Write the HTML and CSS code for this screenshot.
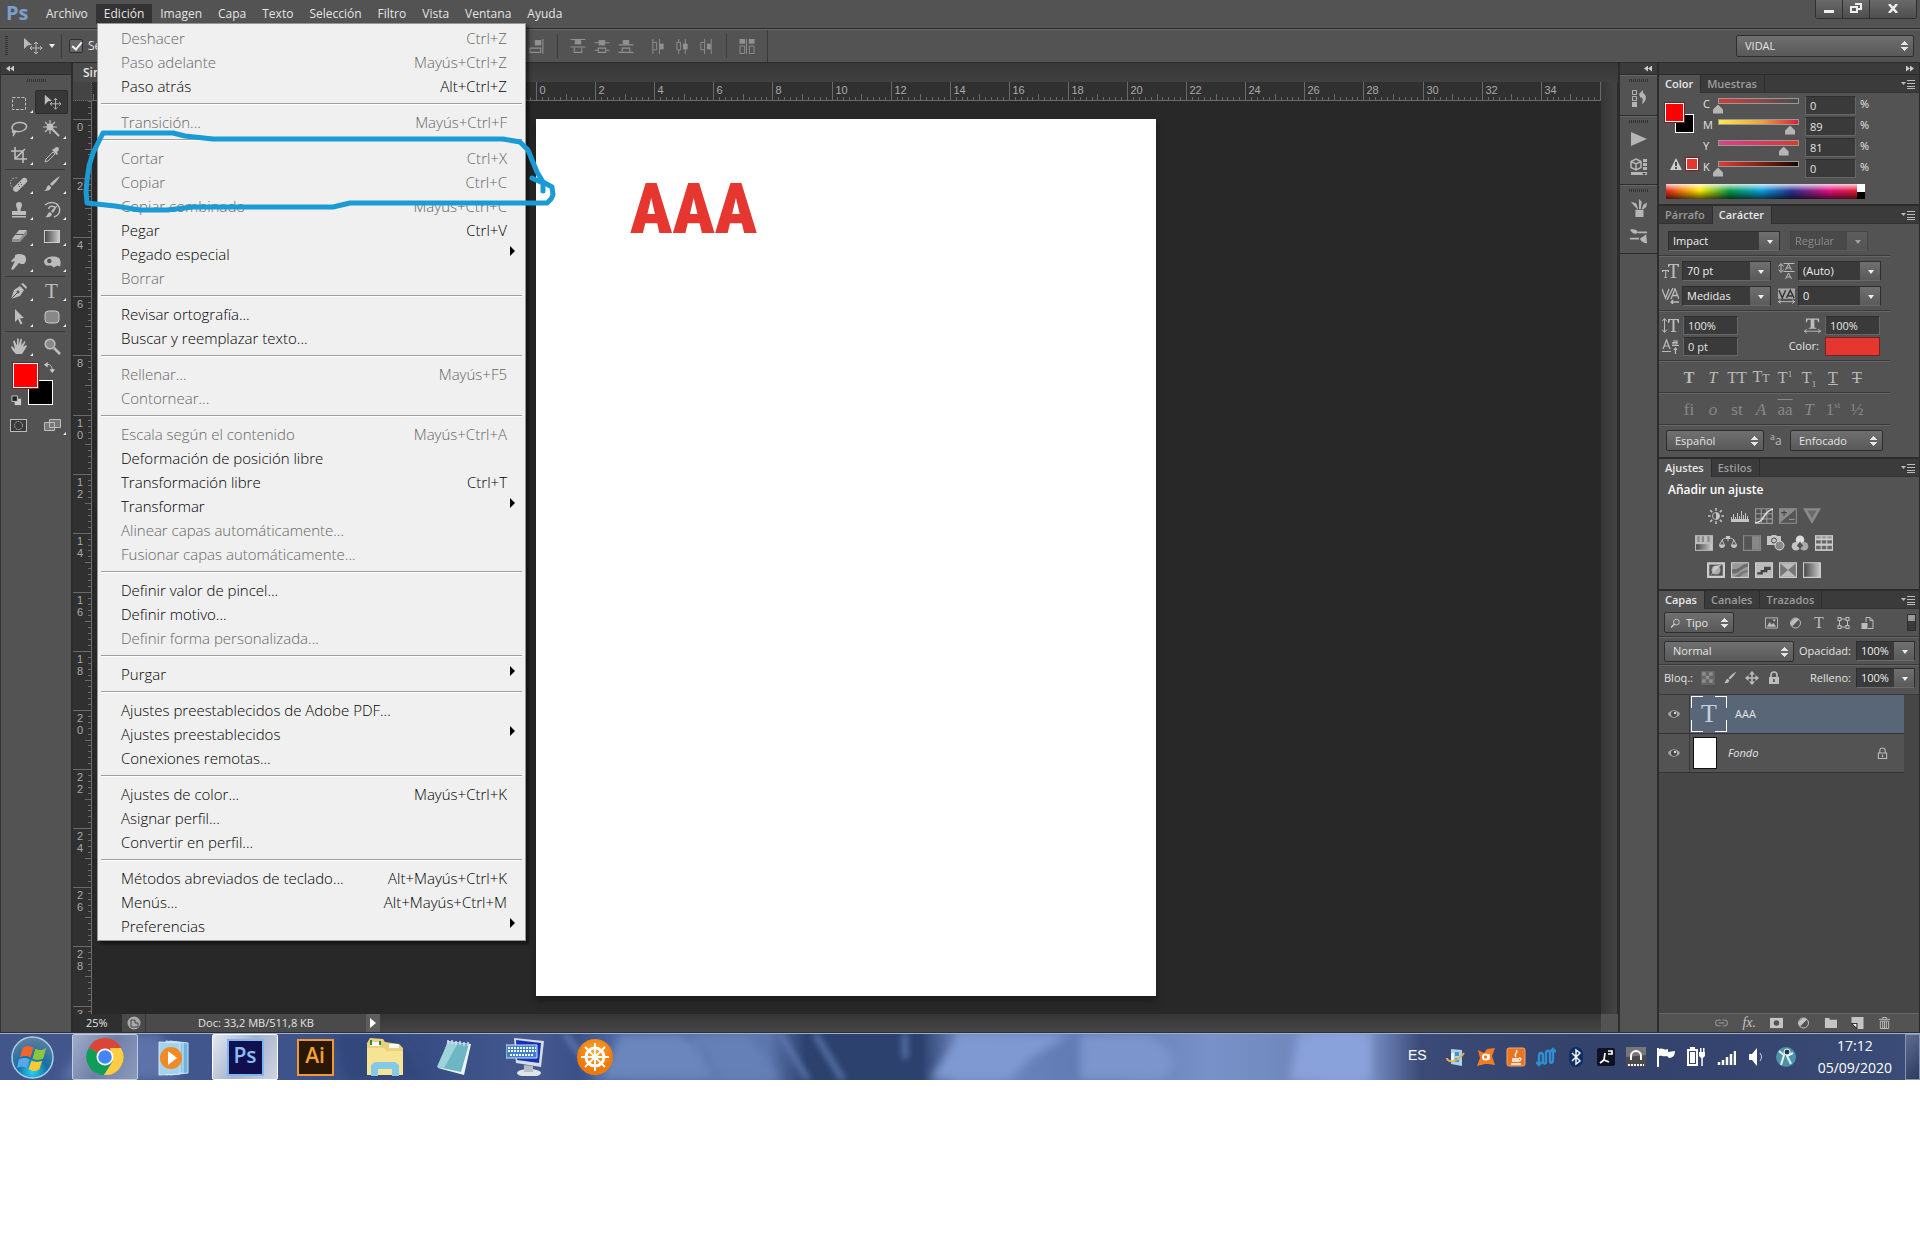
FILE: index.html
```html
<!DOCTYPE html>
<html lang="es">
<head>
	<meta charset="UTF-8">
	<title>Editor de imagen</title>
	<link rel="stylesheet" href="styles.css">
	<script src="rulers.js" defer></script>
</head>
<body>
<svg class="sprite" aria-hidden="true">
	<defs>
		<linearGradient id="gGray"><stop offset="0" stop-color="#444"/><stop offset="1" stop-color="#ccc"/></linearGradient>
		<radialGradient id="gOrb" cx="50%" cy="85%" r="80%"><stop offset="0" stop-color="#27d3f5"/><stop offset=".45" stop-color="#1470a8"/><stop offset="1" stop-color="#5e7d9b"/></radialGradient>
		<radialGradient id="gOrange" cx="50%" cy="35%"><stop offset="0" stop-color="#ffa733"/><stop offset="1" stop-color="#ee7a0a"/></radialGradient>
	</defs>
	<symbol id="i-move" viewBox="0 0 20 18"><path d="M2 1l8 7-4 .3L2 12z" fill="currentColor"/><path d="M14 5v12M8 11h12M12 7l2-2 2 2M12 15l2 2 2-2M10 9l-2 2 2 2M18 9l2 2-2 2" fill="none" stroke="currentColor"/></symbol>
	<symbol id="i-marquee" viewBox="0 0 18 18"><rect x="2.5" y="3.5" width="13" height="12" fill="none" stroke="currentColor" stroke-dasharray="3 1.5"/></symbol>
	<symbol id="i-lasso" viewBox="0 0 18 18"><path d="M4.500 11.500C0 9 2 3 9 2.500s10 4 5 7.500c-3 2-6 2-9 1-3-1-3 2-1 2s1-2 0-2M4 12c1 2 0 3-1 4" fill="none" stroke="currentColor" stroke-width="1.500"/></symbol>
	<symbol id="i-wand" viewBox="0 0 18 18"><path d="M8 8l8 8" stroke="currentColor" stroke-width="2"/><path d="M7 0v14M0 7h14M2 2l10 10M12 2L2 12" stroke="currentColor" stroke-width="1.2"/><circle cx="7" cy="7" r="3.4" fill="currentColor"/></symbol>
	<symbol id="i-crop" viewBox="0 0 18 18"><path d="M5 1v12h12M1 5h12v12M5 13L15 3" fill="none" stroke="currentColor" stroke-width="1.6"/></symbol>
	<symbol id="i-dropper" viewBox="0 0 18 18"><path d="M2 16l1-3 7-7 2 2-7 7z" fill="none" stroke="currentColor"/><path d="M9 4l5 5 1-1-1-2c3-2 2-5 0-5s-2 1-3 2L10 3z" fill="currentColor"/></symbol>
	<symbol id="i-heal" viewBox="0 0 18 18"><path d="M7 3a5 5 0 1 0-3 10" fill="none" stroke="currentColor" stroke-dasharray="1.5 1.5"/><path d="M4 16a2.500 2.500 0 0 1 0-4L13 3a3 3 0 0 1 4 4l-9 9a3 3 0 0 1-4 0z" fill="currentColor"/><path d="M8 9l1 1M10 7l1 1M9 11l1 1M11 9l1 1" stroke="#555"/></symbol>
	<symbol id="i-brush" viewBox="0 0 18 18"><path d="M17 1c-4 2-7 5-10 8l2 2c3-3 6-6 8-10zM6 10l2 2c0 3-3 4-7 4 3-1 2-5 5-6z" fill="currentColor"/></symbol>
	<symbol id="i-stamp" viewBox="0 0 18 18"><path d="M9 1a3 3 0 0 1 3 3c0 2-1.500 3-1.500 6H16v4H2v-4h5.500C7.500 7 6 6 6 4a3 3 0 0 1 3-3zM2 15h14v1.500H2z" fill="currentColor"/></symbol>
	<symbol id="i-history" viewBox="0 0 18 18"><path d="M2 4c5-4 12-3 14 2s-1 9-5 10M6 8c-1-3 5-4 6-1" fill="none" stroke="currentColor" stroke-width="1.5"/><path d="M16 2L8 10l2 2zM7 11l2 2c0 2-3 4-7 3 3-1 2-4 5-5z" fill="currentColor"/></symbol>
	<symbol id="i-eraser" viewBox="0 0 18 18"><path d="M9 3h8l-7 9H2z" fill="currentColor"/><path d="M5.500 7.500h8" stroke="#555"/><path d="M10 12l7-9v4l-7 8H2v-3z" fill="#909090"/></symbol>
	<symbol id="i-grad" viewBox="0 0 18 18"><rect x="1.500" y="3.500" width="15" height="12" fill="url(#gGray)" stroke="#ccc"/></symbol>
	<symbol id="i-smudge" viewBox="0 0 18 18"><path d="M5 2c4-2 8-1 10 1 2 3 1 6-1 8h-3l-2-1-6 7-2-1 4-8-3 1-1-1 4-4z" fill="currentColor"/></symbol>
	<symbol id="i-sponge" viewBox="0 0 20 18"><path d="M1 8c3-6 12-6 16-4 3 2 3 7 2 10l-3-1-4 2-3-2H4c-2-1-3-3-3-5z" fill="currentColor"/><circle cx="7" cy="8" r="2.500" fill="#505050"/></symbol>
	<symbol id="i-pen" viewBox="0 0 18 18"><path d="M1 17l3-9 6-4 4 4-4 6z" fill="currentColor"/><path d="M11 2l5 5 1-2-4-4z" fill="currentColor"/><path d="M1 17l6-6" stroke="#505050"/><circle cx="8" cy="10" r="1.400" fill="#505050"/></symbol>
	<symbol id="i-arrow" viewBox="0 0 18 18"><path d="M5 1l9 9-4 .5 2.500 5-2 1L8 11l-3 3z" fill="currentColor"/></symbol>
	<symbol id="i-rrect" viewBox="0 0 18 18"><rect x="2" y="3" width="14" height="12" rx="3.500" fill="#888" stroke="#ccc"/></symbol>
	<symbol id="i-hand" viewBox="0 0 18 18"><path d="M6 17c-2-2-4-4-5-7l1-1 3 3L3 4l1.500-.6L7 8.500V1.500h1.700V8l1.800-6.300L12 2l-.8 6.500L14.500 4l1 .8L13 10l3-2 1 1-3 5-2 3z" fill="currentColor"/></symbol>
	<symbol id="i-zoom" viewBox="0 0 18 18"><circle cx="7" cy="7" r="4.800" fill="#888" stroke="currentColor" stroke-width="1.600"/><path d="M11 11l6 6" stroke="currentColor" stroke-width="2.600"/></symbol>
	<symbol id="i-swap" viewBox="0 0 12 12"><path d="M3 3c4-1 6 2 6 6" fill="none" stroke="currentColor"/><path d="M0 3l4-3v6zM6 8h6l-3 4z" fill="currentColor"/></symbol>
	<symbol id="i-default" viewBox="0 0 12 12"><path d="M4 4h7v7H4z" fill="#ccc"/><path d="M1 1h6v6H1z" fill="#222" stroke="#ccc"/></symbol>
	<symbol id="i-mask" viewBox="0 0 18 14"><rect x=".5" y="1.500" width="16" height="12" fill="#3a3a3a" stroke="currentColor"/><circle cx="8.500" cy="7.500" r="4" fill="none" stroke="currentColor" stroke-dasharray="1.500 1"/></symbol>
	<symbol id="i-screen" viewBox="0 0 18 14"><path d="M6.500 1.500h11v8h-11zM1.500 4.500h10v8h-10z" fill="#777" stroke="currentColor"/></symbol>
	<symbol id="i-al1" viewBox="0 0 14 14"><path d="M0 .5h14M0 7.500h14" stroke="currentColor"/><path d="M4 1h6v4H4z" fill="currentColor"/><path d="M3.500 8v4.500h7V8" fill="none" stroke="currentColor"/></symbol>
	<symbol id="i-al2" viewBox="0 0 14 14"><path d="M0 3.500h14M0 10.500h14" stroke="currentColor"/><path d="M4 1h6v5H4z" fill="currentColor"/><path d="M3.500 8.500h7v4h-7z" fill="#535353" stroke="currentColor"/></symbol>
	<symbol id="i-al3" viewBox="0 0 14 14"><path d="M0 5.500h14M0 12.500h14" stroke="currentColor"/><path d="M4 1h6v4H4z" fill="currentColor"/><path d="M3.500 12V8.500h7V12" fill="none" stroke="currentColor"/></symbol>
	<symbol id="i-al4" viewBox="0 0 14 16"><path d="M1.500 0v16M8.500 0v16" stroke="currentColor"/><path d="M9 5h4v6H9z" fill="currentColor"/><path d="M2 3.500h3.500v8H2" fill="none" stroke="currentColor"/></symbol>
	<symbol id="i-al5" viewBox="0 0 14 16"><path d="M3.500 0v16M10.500 0v16" stroke="currentColor"/><path d="M8 5h5v6H8z" fill="currentColor"/><path d="M1.500 3.500h4v8h-4z" fill="#535353" stroke="currentColor"/></symbol>
	<symbol id="i-al6" viewBox="0 0 14 16"><path d="M5.500 0v16M12.500 0v16" stroke="currentColor"/><path d="M8 5h4v6H8z" fill="currentColor"/><path d="M5 3.500H1.500v8H5" fill="none" stroke="currentColor"/></symbol>
	<symbol id="i-alr" viewBox="0 0 14 14"><path d="M12.500 0v14" stroke="currentColor"/><path d="M5 1h6v5H5z" fill="currentColor"/><path d="M.5 8.500h10v4H.5z" fill="none" stroke="currentColor"/></symbol>
	<symbol id="i-dist" viewBox="0 0 16 16"><path d="M7.500 0v16" stroke="currentColor"/><path d="M0 0h6v5H0zM10 0h6v5h-6z" fill="currentColor"/><path d="M.5 7.500h5v8h-5zM10.500 7.500h5v8h-5z" fill="none" stroke="currentColor"/></symbol>
	<symbol id="i-menu" viewBox="0 0 14 9"><path d="M0 2h5L2.500 5z" fill="currentColor"/><path d="M6 .5h8M6 3.500h8M6 6.500h8M6 8.500h8" stroke="currentColor"/></symbol>
	<symbol id="i-actions" viewBox="0 0 18 18"><path d="M2.500 1.500h4v4h-4zM2.500 7.500h4v4h-4z" fill="none" stroke="currentColor"/><path d="M2 13h5v5H2zM9 5l4-4v3c4 2 4 8-1 11 1-4 1-6-1-7v2z" fill="currentColor"/></symbol>
	<symbol id="i-play" viewBox="0 0 18 18"><path d="M1 2l16 7-16 7z" fill="currentColor"/></symbol>
	<symbol id="i-props" viewBox="0 0 18 18"><path d="M6 1l5 2.500v6L6 12 1 9.500v-6zM1 3.500L6 6l5-2.500M6 6v6" fill="none" stroke="currentColor" stroke-width="1.500"/><path d="M13 1h4v3h-4zM13 5h4v3h-4zM13 9h4v3h-4zM1 14h16v3H1z" fill="currentColor"/><path d="M12 15h4l-2 2z" fill="#444"/></symbol>
	<symbol id="i-brushes" viewBox="0 0 18 20"><path d="M5 12h9v8H5zM8 11L6 5 3 4 0 3l3 4 4 4zM9 11V0l3 3-1 8zM12 11l2-5 4-2-1 5-3 2z" fill="currentColor"/></symbol>
	<symbol id="i-presets" viewBox="0 0 20 18"><path d="M0 2c4-1 8 0 9 3-4 3-6 1-9-3zM9 4h10v2H9zM0 11h10v2H0zM11 12l7-5 1 10c-3 0-6-1-8-5z" fill="currentColor"/></symbol>
	<symbol id="i-warn" viewBox="0 0 12 12"><path d="M6 0l6 12H0z" fill="#ccc"/><path d="M6 4v4M6 9v2" stroke="#222" stroke-width="1.500"/></symbol>
	<symbol id="i-tt" viewBox="0 0 17 16"><path d="M6 1h11v3h-1l-1-2h-2.500v12l2 .5v.5h-6v-.5l2-.5V2H8L7 4H6zM0 7h7v2H6L5.500 8H4.200v6l1 .5v.5h-3v-.5l1-.5V8H1.500L1 9H0z" fill="currentColor"/></symbol>
	<symbol id="i-lead" viewBox="0 0 16 16"><path d="M2.500 1v8M0 3.500l2.500-3 2.500 3M0 6.500l2.500 3 2.500-3M5 .500h11M5 8.500h11M7 7l3-6 3 6M8 5h4M7 16l3-6 3 6M8 14h4" fill="none" stroke="currentColor"/></symbol>
	<symbol id="i-kern" viewBox="0 0 17 16"><path d="M0 1l3.500 9L7 1M9 11l4-10 4 10M10.500 7.500h5M11 0L5 12M9 14h8M11 12l-2 2 2 2" fill="none" stroke="currentColor" stroke-width="1.300"/></symbol>
	<symbol id="i-track" viewBox="0 0 18 16"><path d="M0 0h18v11H0z" fill="#a5a5a5"/><path d="M1 2l3.500 8L8 2M9 10l4-8 4 8M11 8h4" fill="none" stroke="#333" stroke-width="1.500"/><path d="M0 14h18M3 12l-2.500 2L3 16M15 12l2.500 2-2.500 2" fill="none" stroke="currentColor"/></symbol>
	<symbol id="i-vscale" viewBox="0 0 17 16"><path d="M2.500 1v13M0 3.500l2.500-3 2.500 3M0 11.500l2.500 3 2.500-3" fill="none" stroke="currentColor"/><path d="M6 1h11v4h-1l-1-3h-2.500v11l2 .5v.5h-6v-.5l2-.5V2H8L7 5H6z" fill="currentColor"/></symbol>
	<symbol id="i-hscale" viewBox="0 0 18 16"><path d="M2 0h14v4h-1l-1-2.500h-3V9.500l2 .5v1H5v-1l2-.5V1.500H4L3 4H2z" fill="currentColor"/><path d="M0 13.500h18M3 11.500l-2.500 2 2.500 2M15 11.500l2.500 2-2.500 2" fill="none" stroke="currentColor"/></symbol>
	<symbol id="i-base" viewBox="0 0 17 16"><path d="M1 10L4.500 1 8 10M2 7h5M0 12.500h9M10 6.500h7M13.500 15V9M12 11l1.500-2 1.500 2M11 2h4v3h-4V3.500h4" fill="none" stroke="currentColor" stroke-width="1.200"/></symbol>
	<symbol id="i-sun" viewBox="0 0 18 18"><path d="M9 0v3M9 15v3M0 9h3M15 9h3M2.500 2.500l2.200 2.200M13.300 13.300l2.200 2.200M15.500 2.500l-2.200 2.200M4.700 13.300l-2.200 2.200" stroke="currentColor" stroke-width="1.800"/><circle cx="9" cy="9" r="4" fill="none" stroke="currentColor"/><path d="M9 5a4 4 0 0 1 0 8z" fill="currentColor"/></symbol>
	<symbol id="i-levels" viewBox="0 0 18 14"><path d="M.5 8v5M2.500 5v8M4.500 8v5M6.500 4v9M8.500 7v6M10.500 2v11M12.500 6v7M14.500 4v9M16.500 7v6" stroke="currentColor"/><path d="M0 10h18v3H0z" fill="currentColor"/></symbol>
	<symbol id="i-curves" viewBox="0 0 16 14"><path d="M.5.500h15v13H.5zM5.500 0v14M10.500 0v14M0 5h16M0 9.500h16" fill="none" stroke="#999"/><path d="M0 13C9 13 7 2 16 1" fill="none" stroke="#ddd" stroke-width="1.400"/></symbol>
	<symbol id="i-expo" viewBox="0 0 16 14"><path d="M0 0h16v14H0z" fill="#8b8b8b"/><path d="M1 13L15 1v12z" fill="#555"/><path d="M2 4h5M4.500 2v5" stroke="#444"/><path d="M9 10h5" stroke="#999"/></symbol>
	<symbol id="i-vib" viewBox="0 0 16 14"><path d="M0 0h16L8 14z" fill="#8a8a8a"/><path d="M4 2h8L8 9z" fill="#6a6a6a"/></symbol>
	<symbol id="i-hue" viewBox="0 0 16 14"><path d="M0 0h16v14H0z" fill="#bbb"/><path d="M2 1h2v5H2zM6 1h2v5H6zM11 1h2v5h-2z" fill="#888"/><path d="M1 8h14v5H1z" fill="url(#gGray)"/></symbol>
	<symbol id="i-bal" viewBox="0 0 18 14"><path d="M9 0v5M3 4c3-3 9-3 12 0M3 4l-2.500 5h5zM15 4l-2.500 5h5z" fill="none" stroke="currentColor"/><path d="M0 9h6c0 4-6 4-6 0zM12 9h6c0 4-6 4-6 0zM7 0h4v3H7z" fill="currentColor"/></symbol>
	<symbol id="i-bw" viewBox="0 0 16 14"><path d="M.5.500h15v13H.5z" fill="#555" stroke="#888"/><path d="M8 1h7v12H8z" fill="#888"/></symbol>
	<symbol id="i-photo" viewBox="0 0 18 16"><path d="M0 1h4l1-1h4l1 1h4v9H0z" fill="currentColor"/><circle cx="7" cy="5.500" r="2.500" fill="none" stroke="#444"/><circle cx="12.500" cy="10.500" r="4.500" fill="#888" stroke="#ddd"/></symbol>
	<symbol id="i-mixer" viewBox="0 0 16 15"><circle cx="8" cy="4.500" r="4" fill="#ddd"/><circle cx="4.200" cy="10.500" r="4" fill="#c4c4c4"/><circle cx="11.800" cy="10.500" r="4" fill="#aaa"/><path d="M8 6l3 4-3 3-3-3z" fill="#555"/></symbol>
	<symbol id="i-lut" viewBox="0 0 16 14"><path d="M0 0h16v14H0z" fill="#ccc"/><path d="M1 2h4M6 2h4M11 2h4" stroke="#999" stroke-width="2"/><path d="M1 6h4M6 6h4M11 6h4M1 11h4M6 11h4M11 11h4" stroke="#666" stroke-width="3"/></symbol>
	<symbol id="i-invert" viewBox="0 0 16 14"><path d="M1 1h14v12H1z" fill="#555" stroke="#ccc" stroke-width="2"/><circle cx="8" cy="7" r="4" fill="#aaa"/><path d="M3 12L13 2l-7 2-1 5z" fill="#ccc"/></symbol>
	<symbol id="i-poster" viewBox="0 0 16 14"><path d="M.5.500h15v13H.5z" fill="#999" stroke="#ccc"/><path d="M1 6c5 2 8-4 14-5v3C9 5 7 11 1 10z" fill="#6c6c6c"/><path d="M3 13c4-2 7-6 12-6v2c-3 0-5 2-7 4z" fill="#777"/></symbol>
	<symbol id="i-thresh" viewBox="0 0 16 14"><path d="M.5.500h15v13H.5z" fill="#bbb" stroke="#ccc"/><path d="M2 9h3V7h3V4h6v3h-3v2H7v2H2z" fill="#444"/></symbol>
	<symbol id="i-selcol" viewBox="0 0 16 14"><path d="M.5.500h15v13H.5z" fill="#777" stroke="#ccc"/><path d="M1 1l7 6 7-6zM1 13l7-6 7 6z" fill="#bbb"/></symbol>
	<symbol id="i-gmap" viewBox="0 0 16 14"><path d="M.5.500h15v13H.5z" fill="url(#gGray)" stroke="#ccc"/></symbol>
	<symbol id="i-img" viewBox="0 0 14 12"><path d="M.5.500h13v11H.5z" fill="none" stroke="currentColor"/><path d="M2 10l3-5 2 3 2-2 3 4zM9 2h2v2H9z" fill="currentColor"/></symbol>
	<symbol id="i-half" viewBox="0 0 12 12"><circle cx="6" cy="6" r="5" fill="none" stroke="currentColor"/><path d="M2.500 9.500l7-7A5 5 0 0 0 2.500 9.500z" fill="currentColor"/></symbol>
	<symbol id="i-shape" viewBox="0 0 12 12"><path d="M2 2h8v8H2z" fill="none" stroke="currentColor"/><path d="M0 0h4v4H0zM8 0h4v4H8zM0 8h4v4H0zM8 8h4v4H8z" fill="currentColor"/><path d="M1 1h2v2H1zM9 1h2v2H9zM1 9h2v2H1zM9 9h2v2H9z" fill="#535353"/></symbol>
	<symbol id="i-smart" viewBox="0 0 12 12"><path d="M4.500 5V.5h4l3 3v8h-5M8.500.500v3h3" fill="none" stroke="currentColor"/><path d="M0 6h6v6H0z" fill="currentColor"/></symbol>
	<symbol id="i-search" viewBox="0 0 10 10"><circle cx="6" cy="4" r="3.200" fill="none" stroke="#ccc"/><path d="M4 6L0 10" stroke="#ccc" stroke-width="1.500"/></symbol>
	<symbol id="i-check" viewBox="0 0 12 12"><path d="M0 0h12v12H0z" fill="#666"/><path d="M1 1h3v3H1zM7 1h3v3H7zM4 4h3v3H4zM1 7h3v3H1zM7 7h3v3H7z" fill="#8e8e8e"/></symbol>
	<symbol id="i-pos" viewBox="0 0 14 14"><path d="M7 1v12M1 7h12" stroke="currentColor" stroke-width="1.500"/><path d="M7 0l3 3.500H4zM7 14l3-3.500H4zM0 7l3.500-3v6zM14 7l-3.500-3v6z" fill="currentColor"/></symbol>
	<symbol id="i-lock" viewBox="0 0 12 14"><path d="M3 7V4a3 3 0 0 1 6 0v3" fill="none" stroke="currentColor" stroke-width="1.600"/><path d="M1 6h10v7H1z" fill="currentColor"/><path d="M6 8v3" stroke="#444" stroke-width="1.500"/></symbol>
	<symbol id="i-lock2" viewBox="0 0 12 14"><path d="M3 6V4a3 3 0 0 1 6 0v2M1.500 6.500h9v6h-9zM6 8v3" fill="none" stroke="currentColor" stroke-width="1.200"/></symbol>
	<symbol id="i-eye" viewBox="0 0 12 10"><path d="M0 5c3-5 9-5 12 0-3 5-9 5-12 0z" fill="#aaa"/><circle cx="6" cy="5" r="3" fill="#444"/><circle cx="7" cy="4" r="1.200" fill="#ddd"/></symbol>
	<symbol id="i-link" viewBox="0 0 14 10"><path d="M6 2H3.500a3 3 0 0 0 0 6H6M8 2h2.500a3 3 0 0 1 0 6H8M4 5h6" fill="none" stroke="#888" stroke-width="1.400"/></symbol>
	<symbol id="i-lmask" viewBox="0 0 14 11"><path d="M0 0h14v11H0z" fill="currentColor"/><circle cx="7" cy="5.500" r="3" fill="#535353"/></symbol>
	<symbol id="i-folder" viewBox="0 0 14 11"><path d="M1 0h5v2h8v9H1z" fill="currentColor"/></symbol>
	<symbol id="i-new" viewBox="0 0 11 11"><path d="M0 0h11v11H5L0 6z" fill="currentColor"/><path d="M0 6h5v5z" fill="#eee" stroke="#333"/></symbol>
	<symbol id="i-trash" viewBox="0 0 12 13"><path d="M0 2.500h12M4 2V.5h4V2M1.500 4.500h9v8h-9zM4 5v7M6 5v7M8 5v7" fill="none" stroke="currentColor"/></symbol>
</svg>

<div class="app">
	<header class="menubar">
		<span class="logo">Ps</span>
		<nav class="menus">
			<button>Archivo</button>
			<button class="open">Edición</button>
			<button>Imagen</button>
			<button>Capa</button>
			<button>Texto</button>
			<button>Selección</button>
			<button>Filtro</button>
			<button>Vista</button>
			<button>Ventana</button>
			<button>Ayuda</button>
		</nav>
		<div class="win-btns">
			<button aria-label="Minimizar"><svg width="10" height="10"><path d="M0 7h10v3H0z" fill="#eee"/></svg></button>
			<button aria-label="Restaurar"><svg width="12" height="10"><path d="M5 1h6v5H8M1 4h6v5H1z" fill="none" stroke="#eee" stroke-width="2"/></svg></button>
			<button class="close" aria-label="Cerrar"><svg width="10" height="9"><path d="M1 0l8 9M9 0L1 9" stroke="#eee" stroke-width="2.500"/></svg></button>
		</div>
	</header>

	<div class="options">
		<div class="options-left">
			<i class="grip-v"></i>
			<svg class="opt-move"><use href="#i-move"/></svg>
			<i class="caret"></i>
			<i class="vline"></i>
			<label class="tick"><input type="checkbox" checked>Selec.</label>
		</div>
		<div class="aligns">
			<svg class="i14"><use href="#i-alr"/></svg>
			<i class="vline"></i>
			<svg class="i16"><use href="#i-al1"/></svg>
			<svg class="i16"><use href="#i-al2"/></svg>
			<svg class="i16"><use href="#i-al3"/></svg>
			<svg class="i16 far"><use href="#i-al4"/></svg>
			<svg class="i16"><use href="#i-al5"/></svg>
			<svg class="i16"><use href="#i-al6"/></svg>
			<i class="vline"></i>
			<svg class="i16"><use href="#i-dist"/></svg>
			<i class="vline end"></i>
		</div>
		<select class="btn-select workspace" aria-label="Espacio de trabajo"><option>VIDAL</option></select>
	</div>

	<div class="main">
		<aside class="tools">
			<div class="strip"><i class="chev left"></i></div>
			<i class="grip-h"></i>
			<div class="tool-grid">
				<button class="more" aria-label="Marco"><svg><use href="#i-marquee"/></svg></button>
				<button class="active" aria-label="Mover"><svg><use href="#i-move"/></svg></button>
				<button class="more" aria-label="Lazo"><svg><use href="#i-lasso"/></svg></button>
				<button class="more" aria-label="Varita"><svg><use href="#i-wand"/></svg></button>
				<button class="more" aria-label="Recortar"><svg><use href="#i-crop"/></svg></button>
				<button class="more" aria-label="Cuentagotas"><svg><use href="#i-dropper"/></svg></button>
				<hr>
				<button class="more" aria-label="Corrector"><svg><use href="#i-heal"/></svg></button>
				<button class="more" aria-label="Pincel"><svg><use href="#i-brush"/></svg></button>
				<button class="more" aria-label="Tampón"><svg><use href="#i-stamp"/></svg></button>
				<button class="more" aria-label="Pincel de historia"><svg><use href="#i-history"/></svg></button>
				<button class="more" aria-label="Borrador"><svg><use href="#i-eraser"/></svg></button>
				<button class="more" aria-label="Degradado"><svg><use href="#i-grad"/></svg></button>
				<button class="more" aria-label="Dedo"><svg><use href="#i-smudge"/></svg></button>
				<button class="more" aria-label="Esponja"><svg><use href="#i-sponge"/></svg></button>
				<hr>
				<button class="more" aria-label="Pluma"><svg><use href="#i-pen"/></svg></button>
				<button class="more serif" aria-label="Texto">T</button>
				<button class="more" aria-label="Selección de trazado"><svg><use href="#i-arrow"/></svg></button>
				<button class="more" aria-label="Rectángulo redondeado"><svg><use href="#i-rrect"/></svg></button>
				<hr>
				<button class="more" aria-label="Mano"><svg><use href="#i-hand"/></svg></button>
				<button aria-label="Zoom"><svg><use href="#i-zoom"/></svg></button>
			</div>
			<div class="swatches">
				<i class="bg"></i><i class="fg"></i>
				<svg class="swap"><use href="#i-swap"/></svg>
				<svg class="default"><use href="#i-default"/></svg>
			</div>
			<div class="tool-grid modes">
				<button aria-label="Máscara rápida"><svg><use href="#i-mask"/></svg></button>
				<button class="more" aria-label="Modo de pantalla"><svg><use href="#i-screen"/></svg></button>
			</div>
		</aside>

		<section class="doc">
			<div class="doc-tabs"><span class="doc-tab">Sin título-1</span></div>
			<div class="doc-area">
				<i class="corner"></i>
				<svg class="ruler ruler-h" id="rulerH"></svg>
				<i class="scroll-v"></i>
				<svg class="ruler ruler-v" id="rulerV"></svg>
				<div class="canvas">
					<div class="page"><span class="art">AAA</span></div>
				</div>
			</div>
			<footer class="status">
				<span class="pct">25%</span>
				<span class="share"><svg width="14" height="14"><circle cx="7" cy="7" r="6.500" fill="#aaa"/><path d="M4 4h4v3h3v4H4z" fill="none" stroke="#444"/></svg></span>
				<span class="docsize">Doc: 33,2 MB/511,8 KB</span>
				<button class="status-more" aria-label="Más"><i></i></button>
				<i class="scroll-h"></i>
				<i class="scroll-corner"></i>
			</footer>
		</section>

		<aside class="dock">
			<div class="strip end"><i class="chev left"></i></div>
			<div class="dock-group"><i class="grip-h"></i><svg><use href="#i-actions"/></svg></div>
			<div class="dock-group"><i class="grip-h"></i><svg><use href="#i-play"/></svg><svg><use href="#i-props"/></svg></div>
			<div class="dock-group"><i class="grip-h"></i><svg><use href="#i-brushes"/></svg><svg><use href="#i-presets"/></svg></div>
		</aside>

		<aside class="panels">
			<div class="strip end"><i class="chev right"></i></div>

			<section class="panel">
				<div class="tabs"><button class="on">Color</button><button>Muestras</button><svg><use href="#i-menu"/></svg></div>
				<div class="color-body">
					<div class="color-left">
						<div class="pair"><i class="bg"></i><i class="fg"></i></div>
						<div class="gamut"><svg width="12" height="12"><use href="#i-warn"/></svg><i></i></div>
					</div>
					<div class="channels">
						<div class="ch c"><label for="c">C</label><div class="slider"><input type="range" aria-label="C" value="0"></div><input class="field" id="c" value="0"><span>%</span></div>
						<div class="ch m"><label for="m">M</label><div class="slider"><input type="range" aria-label="M" value="89"></div><input class="field" id="m" value="89"><span>%</span></div>
						<div class="ch y"><label for="y">Y</label><div class="slider"><input type="range" aria-label="Y" value="81"></div><input class="field" id="y" value="81"><span>%</span></div>
						<div class="ch k"><label for="k">K</label><div class="slider"><input type="range" aria-label="K" value="0"></div><input class="field" id="k" value="0"><span>%</span></div>
					</div>
				</div>
				<div class="spectrum"><i></i></div>
			</section>

			<section class="panel">
				<div class="tabs"><button>Párrafo</button><button class="on">Carácter</button><svg><use href="#i-menu"/></svg></div>
				<div class="char-body">
					<div class="char-row">
						<div class="combo w-l"><select aria-label="Fuente"><option>Impact</option></select></div>
						<div class="combo w-s off"><select aria-label="Estilo" disabled><option>Regular</option></select></div>
					</div>
					<hr>
					<div class="char-grid">
						<svg class="glyph"><use href="#i-tt"/></svg>
						<div class="combo"><select aria-label="Tamaño"><option>70 pt</option></select></div>
						<svg class="glyph second"><use href="#i-lead"/></svg>
						<div class="combo"><select aria-label="Interlineado"><option>(Auto)</option></select></div>
						<svg class="glyph"><use href="#i-kern"/></svg>
						<div class="combo"><select aria-label="Kerning"><option>Medidas</option></select></div>
						<svg class="glyph second"><use href="#i-track"/></svg>
						<div class="combo"><select aria-label="Tracking"><option>0</option></select></div>
					</div>
					<hr>
					<div class="scale-grid">
						<svg class="glyph"><use href="#i-vscale"/></svg>
						<input class="field" aria-label="Escala vertical" value="100%">
						<svg class="glyph last"><use href="#i-hscale"/></svg>
						<input class="field" aria-label="Escala horizontal" value="100%">
						<svg class="glyph"><use href="#i-base"/></svg>
						<input class="field" aria-label="Línea de base" value="0 pt">
						<span class="color-label">Color:</span>
						<button class="text-color" aria-label="Color"></button>
					</div>
					<hr>
					<div class="styles">
						<button><b>T</b></button><button><i>T</i></button><button>TT</button><button>T<small>T</small></button><button>T<sup>1</sup></button><button>T<sub>1</sub></button><button><u>T</u></button><button><s>T</s></button>
					</div>
					<hr>
					<div class="styles dim">
						<button>fi</button><button><i>o</i></button><button>st</button><button><i>A</i></button><button class="over">aa</button><button><i>T</i></button><button>1<sup>st</sup></button><button>½</button>
					</div>
					<hr>
					<div class="lang-row">
						<select class="btn-select lang" aria-label="Idioma"><option>Español</option></select>
						<span class="aa"><sup>a</sup>a</span>
						<select class="btn-select aliasing" aria-label="Suavizado"><option>Enfocado</option></select>
					</div>
				</div>
			</section>

			<section class="panel">
				<div class="tabs"><button class="on">Ajustes</button><button>Estilos</button><svg><use href="#i-menu"/></svg></div>
				<div class="adjust-body">
					<h2>Añadir un ajuste</h2>
					<div class="adj"><svg><use href="#i-sun"/></svg><svg><use href="#i-levels"/></svg><svg><use href="#i-curves"/></svg><svg><use href="#i-expo"/></svg><svg><use href="#i-vib"/></svg></div>
					<div class="adj"><svg><use href="#i-hue"/></svg><svg><use href="#i-bal"/></svg><svg><use href="#i-bw"/></svg><svg><use href="#i-photo"/></svg><svg><use href="#i-mixer"/></svg><svg><use href="#i-lut"/></svg></div>
					<div class="adj"><svg><use href="#i-invert"/></svg><svg><use href="#i-poster"/></svg><svg><use href="#i-thresh"/></svg><svg><use href="#i-selcol"/></svg><svg><use href="#i-gmap"/></svg></div>
				</div>
			</section>

			<section class="panel layers">
				<div class="tabs"><button class="on">Capas</button><button>Canales</button><button>Trazados</button><svg><use href="#i-menu"/></svg></div>
				<div class="filter-row">
					<div class="find"><svg><use href="#i-search"/></svg><select class="btn-select" aria-label="Filtro"><option>Tipo</option></select></div>
					<div class="kinds">
						<svg><use href="#i-img"/></svg><svg><use href="#i-half"/></svg><span class="serif">T</span><svg><use href="#i-shape"/></svg><svg><use href="#i-smart"/></svg>
					</div>
					<i class="toggle"></i>
				</div>
				<div class="blend-row">
					<select class="btn-select" aria-label="Modo de fusión"><option>Normal</option></select>
					<span>Opacidad:</span>
					<div class="combo"><select aria-label="Opacidad"><option>100%</option></select></div>
				</div>
				<div class="blend-row locks">
					<span class="lock-label">Bloq.:</span>
					<svg><use href="#i-check"/></svg><svg><use href="#i-brush"/></svg><svg><use href="#i-pos"/></svg><svg><use href="#i-lock"/></svg>
					<span class="fill-label">Relleno:</span>
					<div class="combo"><select aria-label="Relleno"><option>100%</option></select></div>
				</div>
				<ul class="layer-list">
					<li class="sel"><span class="eye"><svg><use href="#i-eye"/></svg></span><span class="thumb-t serif">T</span><span class="name">AAA</span></li>
					<li><span class="eye"><svg><use href="#i-eye"/></svg></span><span class="thumb"></span><em class="name">Fondo</em><svg class="lk"><use href="#i-lock2"/></svg></li>
				</ul>
				<div class="layer-foot">
					<svg><use href="#i-link"/></svg>
					<span class="fx">fx.</span>
					<svg><use href="#i-lmask"/></svg>
					<svg><use href="#i-half"/></svg>
					<svg><use href="#i-folder"/></svg>
					<svg><use href="#i-new"/></svg>
					<svg><use href="#i-trash"/></svg>
				</div>
			</section>
		</aside>
	</div>

	<!-- menú Edición -->
	<div class="dropdown">
		<button disabled>Deshacer<kbd>Ctrl+Z</kbd></button>
		<button disabled>Paso adelante<kbd>Mayús+Ctrl+Z</kbd></button>
		<button>Paso atrás<kbd>Alt+Ctrl+Z</kbd></button>
		<hr>
		<button disabled>Transición...<kbd>Mayús+Ctrl+F</kbd></button>
		<hr>
		<button disabled>Cortar<kbd>Ctrl+X</kbd></button>
		<button disabled>Copiar<kbd>Ctrl+C</kbd></button>
		<button disabled>Copiar combinado<kbd>Mayús+Ctrl+C</kbd></button>
		<button>Pegar<kbd>Ctrl+V</kbd></button>
		<button class="sub">Pegado especial</button>
		<button disabled>Borrar</button>
		<hr>
		<button>Revisar ortografía...</button>
		<button>Buscar y reemplazar texto...</button>
		<hr>
		<button disabled>Rellenar...<kbd>Mayús+F5</kbd></button>
		<button disabled>Contornear...</button>
		<hr>
		<button disabled>Escala según el contenido<kbd>Mayús+Ctrl+A</kbd></button>
		<button>Deformación de posición libre</button>
		<button>Transformación libre<kbd>Ctrl+T</kbd></button>
		<button class="sub">Transformar</button>
		<button disabled>Alinear capas automáticamente...</button>
		<button disabled>Fusionar capas automáticamente...</button>
		<hr>
		<button>Definir valor de pincel...</button>
		<button>Definir motivo...</button>
		<button disabled>Definir forma personalizada...</button>
		<hr>
		<button class="sub">Purgar</button>
		<hr>
		<button>Ajustes preestablecidos de Adobe PDF...</button>
		<button class="sub">Ajustes preestablecidos</button>
		<button>Conexiones remotas...</button>
		<hr>
		<button>Ajustes de color...<kbd>Mayús+Ctrl+K</kbd></button>
		<button>Asignar perfil...</button>
		<button>Convertir en perfil...</button>
		<hr>
		<button>Métodos abreviados de teclado...<kbd>Alt+Mayús+Ctrl+K</kbd></button>
		<button>Menús...<kbd>Alt+Mayús+Ctrl+M</kbd></button>
		<button class="sub">Preferencias</button>
	</div>

	<svg class="scribble" width="570" height="230" fill="none" stroke="#1a9bd5" stroke-width="5" stroke-linejoin="round" stroke-linecap="round">
		<path d="M87 203l-1-12 1-11 2-14 4-13 10-20h70l12 3 28 3h290l17 3 8 8 9 22 6 10 9 5 1 8-2 4-4 4H350l-17 4H193l-26 3h-27l-25-4z"/>
		<path d="M532 178l4 2 7 3v8"/>
	</svg>
</div>

<div class="taskbar">
	<svg class="backdrop" viewBox="0 0 1920 47" preserveAspectRatio="none" aria-hidden="true">
		<defs><filter id="soft" x="-10%" y="-50%" width="120%" height="200%"><feGaussianBlur stdDeviation="5"/></filter><filter id="soft2" x="-10%" y="-50%" width="120%" height="200%"><feGaussianBlur stdDeviation="3"/></filter></defs>
		<g filter="url(#soft)">
			<path d="M90 0h70l20 47H60z" fill="#5b72a8"/>
			<path d="M335 0h60l30 47h-80z" fill="#33477c"/>
			<path d="M620 0h60l60 47H600z" fill="#6b86bc"/>
			<path d="M690 0h60l30 47h-70z" fill="#6580b5"/>
			<path d="M960 0h110l-40 25-20 22h-80z" fill="#7f9ad2"/>
			<path d="M1080 0h60c40 10 40 40 20 47h-80z" fill="#7c95cc"/>
			<path d="M1300 0h70v47h-80z" fill="#8aa2dc"/>
		</g>
		<g filter="url(#soft2)" stroke="#5f7ab2" stroke-width="5" fill="none">
			<path d="M565 0l35 47M780 0l28 47M815 0l28 47M905 0v25M700 10l20 37"/>
		</g>
	</svg>
	<button class="start" aria-label="Inicio"><svg viewBox="0 0 44 44"><circle cx="22" cy="22" r="21" fill="url(#gOrb)" stroke="#a9cfe6" stroke-width="1.500"/><path d="M12 12c4-3 8-2 11 0l-3 10c-4-2-7-2-11 0z" fill="#f0652b"/><path d="M25 13c4 2 7 2 11-1l-3 11c-4 2-7 2-11 0z" fill="#8cc63e"/><path d="M8 24c4-2 8-2 11 0l-3 9c-3-2-7-2-10 0z" fill="#54a9e8"/><path d="M21 25c4 2 7 2 11 0l-3 9c-4 3-7 2-11 0z" fill="#fccb2f"/></svg></button>
	<button class="task running" aria-label="Chrome"><svg viewBox="0 0 38 38"><path d="M19 19L3 9.500A18 18 0 0 1 35 10z" fill="#db4437"/><path d="M3 9.500A18 18 0 0 0 18 37l8-13z" fill="#0f9d58"/><path d="M35 10a18 18 0 0 1-17 27l9-14-3-13z" fill="#ffcd40"/><circle cx="19" cy="19" r="8.500" fill="#fff"/><circle cx="19" cy="19" r="6.800" fill="#4285f4"/></svg></button>
	<button class="task" aria-label="Reproductor"><svg viewBox="0 0 38 38"><path d="M14 3l18 2v30l-18 2z" fill="#6fb3dc" stroke="#cfe7f5"/><path d="M10 3l17 2v30l-17 2z" fill="#84c3e6" stroke="#cfe7f5"/><path d="M3 4l21 1v31L3 37z" fill="#a5d3ee" stroke="#cfe7f5"/><circle cx="15" cy="20" r="11" fill="#f08a24"/><path d="M12 13l9 7-9 7z" fill="#fff"/></svg></button>
	<button class="task running on" aria-label="Photoshop"><span class="adobe ps">Ps</span></button>
	<button class="task" aria-label="Illustrator"><span class="adobe ai">Ai</span></button>
	<button class="task" aria-label="Explorador"><svg viewBox="0 0 38 38"><path d="M1 5l3-5 13 1 2 3 14 2 4 4v26H1z" fill="#ead27a"/><path d="M4 4h10v4H4zM23 6h10v4H23z" fill="#fff"/><path d="M5 2v5M14 3v4" stroke="#2a8a3a" stroke-width="2"/><path d="M1 10h17l2 3h17v24H1z" fill="#f7e394"/><path d="M5 38V27l4-3h20l4 3v11h-7v-7H12v7z" fill="#86c8e8"/></svg></button>
	<button class="task" aria-label="Bloc de notas"><svg viewBox="0 0 38 38"><path d="M12 3l23 3-7 31L2 30z" fill="#e8f4f8"/><path d="M12 4l21 2-8 28L1 29z" fill="#6fb6c4"/><path d="M12 4l10 1-14 25-7-1z" fill="#9ed2dc"/><path d="M12 2v4M16 2v4M20 3v4M24 3v4M28 4v4M32 4v4" stroke="#dde" stroke-width="1.500"/></svg></button>
	<button class="task" aria-label="Teclado en pantalla"><svg viewBox="0 0 38 38"><path d="M8 0l30 3-3 26-25-4z" fill="#d8dde2"/><path d="M10 2l25 3-2 20-22-3z" fill="#1730b8"/><ellipse cx="23" cy="35" rx="12" ry="4" fill="#dfe4e8"/><path d="M18 27l9 1v6h-9z" fill="#b6bec6"/><path d="M0 7h31v13H0z" fill="#3f7fd0" stroke="#cfe2f7"/><path d="M2 10h28M2 13h28M4 17h24" stroke="#fff" stroke-width="2" stroke-dasharray="2 1"/></svg></button>
	<button class="task" aria-label="Timón"><svg viewBox="0 0 38 38"><circle cx="19" cy="19" r="18" fill="url(#gOrange)"/><circle cx="19" cy="19" r="9" fill="none" stroke="#fff" stroke-width="3"/><path d="M19 5v28M5 19h28M9 9l20 20M29 9L9 29" stroke="#fff" stroke-width="1.800"/><circle cx="19" cy="19" r="3" fill="#fff"/></svg></button>
	<div class="tray">
		<span class="lang-ind">ES</span>
		<div class="tray-icons">
			<svg viewBox="0 0 20 20"><path d="M5 2l11 1v16l-11-2z" fill="#a9d4ec"/><path d="M9 5h4v4H9zM9 11h4v4H9z" fill="#4a8fd0"/><path d="M5 6h3v9H5z" fill="#eaf6fc"/><path d="M1 11c0 5 10 5 17-5" fill="none" stroke="#e9b046" stroke-width="2"/></svg>
			<svg viewBox="0 0 20 20"><path d="M2 3l6 3 3-4 8-1-3 8 3 9-7-1-3 0-8 2 3-8z" fill="#f47b20"/><circle cx="9.500" cy="10" r="2.600" fill="none" stroke="#fff" stroke-width="1.800"/><path d="M13 7v6" stroke="#fff" stroke-width="1.600"/></svg>
			<svg viewBox="0 0 20 20"><rect x="1" y="1" width="18" height="18" rx="2" fill="#e87524" stroke="#f5a66c"/><path d="M10 3c3 2-3 4 0 7M6 12h7M6 14h7M5 17h10M13 11c3 0 2 3 0 3" stroke="#fff" stroke-width="1.300" fill="none"/></svg>
			<svg viewBox="0 0 20 20"><path d="M3 17V9c0-4 4-4 4 0v6c0 2 3 2 3 0V6c0-3 4-3 4 0v8c0 3 3 2 3-1V3M14 5l3-3 3 3M0 15l3 3 3-3" fill="none" stroke="#2e8ed0" stroke-width="2.400"/></svg>
			<svg viewBox="0 0 20 20"><rect x="3" y="0" width="14" height="20" rx="7" fill="#0d2e66"/><path d="M6 6l8 8-4 3V3l4 3-8 8" fill="none" stroke="#fff" stroke-width="1.400"/></svg>
			<svg viewBox="0 0 20 20"><rect x="1" y="1" width="18" height="18" rx="2" fill="#0d1322"/><path d="M4 16l4-3 1-7M8 13l5 2M12 4h4v3h-4" fill="none" stroke="#fff" stroke-width="1.700"/></svg>
			<svg viewBox="0 0 20 20"><path d="M0 0h20v20H0z" fill="#4b4b4d"/><path d="M0 0h20v8L0 10z" fill="#777"/><path d="M5 13V9a5 5 0 0 1 10 0v4" fill="none" stroke="#fff" stroke-width="2"/><path d="M2 18h16" stroke="#fff" stroke-width="2" stroke-dasharray="2 1"/></svg>
			<svg viewBox="0 0 20 20"><path d="M2 1v19" stroke="#fff" stroke-width="2"/><path d="M3 2c4-2 5 2 9 0v3l7-1c0 5-3 7-6 7l-2-2c-4 1-5-1-8 0z" fill="#fff"/></svg>
			<svg viewBox="0 0 20 20"><path d="M2 3h9v15H2z" fill="none" stroke="#fff" stroke-width="2"/><path d="M4 0h5v2H4zM4 5h5v11H4z" fill="#fff"/><path d="M13 5h6v4l-2 2h-2l-2-2zM14 1h1.500v4H14zM17 1h1.500v4H17zM15.300 11h1.500v8h-1.500z" fill="#fff"/></svg>
			<svg viewBox="0 0 20 20"><path d="M3 18v-3M7 18v-5M11 18v-8M15 18V7M19 18V4" stroke="#fff" stroke-width="2.500"/></svg>
			<svg viewBox="0 0 20 20"><path d="M3 7h3l5-6v18l-5-6H3z" fill="#fff"/><path d="M14 6c2 3 2 5 0 8" stroke="#ccd" fill="none"/></svg>
			<svg viewBox="0 0 20 20"><circle cx="10" cy="10" r="10" fill="#4d93a6"/><path d="M3 4l5 4-3 10M17 6l-6 3 4 8" stroke="#e2f1f4" stroke-width="2" fill="none"/><circle cx="11" cy="5" r="3" fill="#203a50" stroke="#fff"/></svg>
		</div>
		<div class="clock"><time>17:12</time><time>05/09/2020</time></div>
		<button class="desktop" aria-label="Mostrar escritorio"></button>
	</div>
</div>
</body>
</html>
```
FILE: styles.css
```css
*{box-sizing:border-box;}
body{margin:0;background:#fff;font:11px/16px "Open Sans","Noto Sans",sans-serif;color:#e4e4e4;}
button,input,select{margin:0;padding:0;border:0;background:none;font:inherit;color:inherit;}
hr{margin:0;border:0;}
.sprite{position:absolute;width:0;height:0;}
.serif{font-family:"Liberation Serif",serif;}
.app{position:relative;background:#535353;overflow:hidden;}

/* menu bar */
.menubar{display:flex;height:29px;border-bottom:1px solid #2c2c2c;}
.logo{width:38px;padding-left:6px;font:bold 20px/26px "Open Sans",sans-serif;color:#7ba0cc;}
.menus{display:flex;align-items:flex-start;padding-top:4px;}
.menus button{padding:0 8px;height:20px;font-size:12px;line-height:20px;}
.menus .open{background:#333;}
.win-btns{display:flex;margin-left:auto;margin-right:3px;height:19px;border:1px solid #303030;border-top:0;border-radius:0 0 3px 3px;}
.win-btns button{width:27px;border-right:1px solid #303030;background:linear-gradient(#6a6a6a,#4e4e4e);}
.win-btns .close{width:46px;border-right:0;}

/* options bar */
.options{display:flex;align-items:center;height:34px;border-top:1px solid #666;border-bottom:1px solid #2c2c2c;}
.options-left{display:flex;align-items:center;width:529px;padding-left:5px;}
.grip-v{width:3px;height:20px;background:repeating-linear-gradient(#333 0 1px,transparent 1px 2px);}
.opt-move{width:20px;height:18px;margin-left:14px;color:#bbb;}
.caret{margin:0 6px 0 7px;border:3px solid transparent;border-top:4px solid #eee;border-bottom:0;}
.vline{width:1px;height:24px;background:#3a3a3a;}
.tick{display:flex;align-items:center;gap:5px;margin-left:7px;font-size:12px;}
.tick input{appearance:none;width:14px;height:14px;border:1px solid #2e2e2e;border-radius:2px;background:#666;}
.tick input::after{content:"";display:block;width:4px;height:8px;margin:0 0 0 4px;border:solid #eee;border-width:0 2px 2px 0;transform:rotate(40deg);}
.aligns{display:flex;align-items:center;align-self:stretch;gap:8px;color:#919191;}
.i14,.i16{width:16px;height:15px;}
.aligns .far{margin-left:8px;}
.aligns .vline{margin:0 4px;}
.aligns .vline.end{align-self:stretch;height:auto;margin-left:4px;}
.btn-select{appearance:none;height:21px;padding:0 8px;border:1px solid #2e2e2e;border-radius:2px;color:#e4e4e4;
	background:conic-gradient(from 135deg at 50% 0,#e4e4e4 0 90deg,transparent 0) right 5px top 5px/7px 4px no-repeat,
	conic-gradient(from -45deg at 50% 100%,#e4e4e4 0 90deg,transparent 0) right 5px top 11px/7px 4px no-repeat,
	linear-gradient(#707070,#595959);}
.workspace{width:178px;height:22px;margin-left:auto;margin-right:6px;}

/* main columns */
.main{display:flex;border-bottom:1px solid #2b2f36;}
.strip{display:flex;align-items:center;height:12px;padding:0 5px;background:#3b3b3b;border-bottom:1px solid #2c2c2c;}
.strip.end{justify-content:flex-end;}
.chev{width:8px;height:6px;background:#ccc;}
.chev.left{clip-path:polygon(0 50%,50% 0,50% 50%,100% 0,100% 100%,50% 50%,50% 100%);}
.chev.right{clip-path:polygon(100% 50%,50% 0,50% 50%,0 0,0 100%,50% 50%,50% 100%);}
.grip-h{display:block;width:19px;height:3px;margin:4px auto 0;background:repeating-linear-gradient(90deg,#333 0 1px,transparent 1px 2px);}
.tools{width:73px;border-right:2px solid #2c2c2c;border-left:1px solid #333;}
.tool-grid{display:grid;grid-template-columns:33px 33px;margin:8px 0 0 1px;color:#bdbdbd;}
.tool-grid button{position:relative;height:26px;font-size:21px;line-height:24px;}
.tool-grid svg{display:block;width:18px;height:18px;margin:0 auto;}
.tool-grid .active{height:24px;border:1px solid #2b2b2b;border-radius:2px;background:#383838;}
.tool-grid hr{grid-column:1/3;margin:1px 3px;height:1px;background:#3a3a3a;}
.tool-grid .more::after{content:"";position:absolute;right:2px;bottom:3px;border:solid transparent;border-width:3px 0 0 3px;border-bottom:0;border-right:3px solid #eee;}
.swatches{position:relative;height:42px;margin:4px 0 0 12px;}
.swatches .fg,.pair .fg{position:absolute;left:0;top:0;width:25px;height:25px;background:#f00;border:1px solid #fff;outline:1px solid #722;}
.swatches .bg,.pair .bg{position:absolute;left:15px;top:17px;width:25px;height:25px;background:#000;border:1px solid #fff;}
.swap,.default{position:absolute;width:11px;height:11px;color:#ccc;}
.swap{left:31px;top:-1px;}
.default{left:-2px;top:32px;}
.tool-grid.modes{margin-top:7px;}

/* document */
.doc{display:flex;flex:1;flex-direction:column;min-width:0;background:#282828;}
.doc-tabs{height:19px;background:linear-gradient(#383838,#404040);}
.doc-tab{display:inline-block;height:19px;padding:0 10px;font-size:12px;font-weight:600;line-height:20px;background:#4a4a4a;}
.doc-area{display:grid;grid-template:19px 1fr/19px 1fr 17px;flex:1;}
.corner{background:#444;border:dotted #666;border-width:0 1px 1px 0;}
.ruler{display:block;width:100%;height:100%;overflow:hidden;background:#303030;font:11px "Liberation Sans",sans-serif;fill:#aaa;}
.ruler-h{border-bottom:1px solid #6a6a6a;}
.ruler-v{height:0;min-height:100%;border-right:1px solid #6a6a6a;}
.scroll-v{grid-row:1/3;grid-column:3;background:linear-gradient(90deg,#363636,#444);border-right:1px solid #2c2c2c;}
.canvas{padding:18px 0 18px 444px;overflow:hidden;}
.page{width:620px;aspect-ratio:620/877;padding:49px 0 0 94px;background:#fff;box-shadow:0 5px 6px #1c1c1c;}
.art{display:block;font:900 70px/82px Impact,"Roboto Condensed","Liberation Sans Narrow","DejaVu Sans Condensed",sans-serif;color:#e63630;}
.status{display:flex;height:18px;background:#333;line-height:18px;}
.status .pct{width:49px;padding-left:13px;background:#2f2f2f;}
.status .share{width:23px;padding:2px 0 0 5px;background:#4a4a4a;}
.status .docsize{width:221px;border-left:1px solid #333;background:#4a4a4a;text-align:center;}
.share svg{display:block;}
.status-more{width:14px;background:#5e5e5e;}
.status-more i{display:block;margin-left:4px;border:5px solid transparent;border-left:6px solid #fff;border-right:0;}
.scroll-h{flex:1;background:linear-gradient(#363636,#454545);}
.scroll-corner{width:17px;background:#535353;}

/* collapsed dock */
.dock{width:41px;border:solid #2c2c2c;border-width:0 2px;}
.dock-group{display:flex;flex-direction:column;align-items:center;gap:10px;padding-bottom:8px;border-bottom:1px solid #2c2c2c;border-top:1px solid #666;color:#b5b5b5;}
.dock-group .grip-h{margin:3px 0 -3px;}
.dock-group svg{width:18px;height:18px;}

/* panels */
.panels{display:flex;flex-direction:column;width:261px;border-right:1px solid #2c2c2c;}
.panel{padding-bottom:5px;border-bottom:2px solid #2c2c2c;}
.tabs{display:flex;height:18px;background:#3b3b3b;border-bottom:1px solid #333;}
.tabs button{padding:0 7px 0 6px;border-right:1px solid #2c2c2c;font-weight:600;line-height:18px;color:#9b9b9b;}
.tabs .on{height:18px;background:#535353;color:#e8e8e8;}
.tabs svg{width:14px;height:9px;margin:5px 4px 0 auto;color:#bbb;}
.field{height:19px;padding-left:4px;background:#3a3a3a;border:1px solid #666;border-top-color:#2e2e2e;}

.color-body{display:flex;padding-top:3px;}
.color-left{width:44px;padding:7px 0 0 6px;}
.pair{position:relative;height:55px;}
.pair .fg,.pair .bg{width:19px;height:19px;}
.pair .bg{left:10px;top:11px;}
.gamut{display:flex;gap:4px;align-items:center;padding-left:5px;}
.gamut i{width:12px;height:12px;background:#e63630;border:1px solid #fff;outline:1px solid #722;}
.ch{display:flex;align-items:flex-start;height:21px;}
.ch label{width:15px;}
.ch .field{width:51px;margin:0 4px 0 6px;}
.slider{width:81px;height:6px;margin-top:2px;border:1px solid #999;}
.c .slider{background:linear-gradient(90deg,#d33a35,#8a4848 55%,#454c50);}
.m .slider{background:linear-gradient(90deg,#fbe94a,#eea040 55%,#d8203a);}
.y .slider{background:linear-gradient(90deg,#d9418c,#d63a5a 60%,#da3c2c);}
.k .slider{background:linear-gradient(90deg,#e03a34,#702010 60%,#1a0400);}
.slider input{appearance:none;display:block;width:91px;height:16px;margin:2px -6px;}
.slider input::-webkit-slider-thumb{appearance:none;width:10px;height:9px;background:#b5b5b5;clip-path:polygon(50% 0,100% 55%,100% 100%,0 100%,0 55%);}
.spectrum{display:flex;width:199px;height:15px;margin:4px 0 0 7px;background:linear-gradient(rgba(255,255,255,.8),transparent 45%,rgba(0,0,0,.65)),linear-gradient(90deg,#e3241f,#ffe600 17%,#0a9a48 32%,#0b9fdd 48%,#2b3390 63%,#e0107f 82%,#e3241f);}
.spectrum i{width:8px;margin-left:auto;background:linear-gradient(#fff 50%,#000 50%);}

.combo{position:relative;height:20px;}
.combo select{appearance:none;width:100%;height:20px;padding-left:4px;border:1px solid #2e2e2e;border-bottom-color:#6a6a6a;color:#eee;background:linear-gradient(#707070,#5a5a5a) right/20px 100% no-repeat #3a3a3a;}
.combo::after{content:"";position:absolute;right:7px;top:9px;border:3px solid transparent;border-top:4px solid #eee;border-bottom:0;pointer-events:none;}
.combo.off{opacity:.5;}
.w-l{width:112px;}
.w-s{width:78px;}
.char-body{padding:7px 0 1px;}
.char-body hr{height:2px;width:231px;margin:4px 0;border-top:1px solid #3a3a3a;background:#666;}
.char-row{display:flex;gap:10px;padding-left:9px;}
.char-grid{display:grid;grid-template-columns:17px 89px 21px 83px;gap:5px 3px;padding-left:3px;}
.glyph{width:17px;height:16px;margin-top:2px;color:#bbb;}
.glyph.second,.glyph.last{justify-self:end;}
.scale-grid{display:grid;grid-template-columns:17px 55px 79px 55px;gap:2px 4px;padding-left:3px;}
.scale-grid .field{width:55px;}
.color-label{text-align:right;line-height:18px;padding-right:2px;}
.text-color{background:#e63630;border:1px solid #722;height:19px;}
.styles{display:grid;grid-template-columns:repeat(8,24px);padding:1px 0 0 18px;color:#bbb;}
.styles button{height:21px;font:16px/20px "Liberation Serif",serif;white-space:nowrap;}
.styles sup,.styles sub{font-size:9px;line-height:0;}
.styles small{font-size:12px;}
.styles.dim{color:#888;}
.styles.dim button{font-size:17px;}
.over{text-decoration:overline;}
.lang-row{display:flex;align-items:center;gap:6px;padding-left:7px;}
.lang{width:98px;}
.aliasing{width:93px;}
.aa{width:14px;color:#bbb;font-size:12px;line-height:16px;}
.aa sup{font-size:9px;line-height:0;}

.adjust-body{height:107px;padding-top:5px;}
.adjust-body h2{margin:0 0 4px 9px;font-size:12px;line-height:16px;font-weight:600;color:#fff;}
.adj{display:flex;justify-content:center;gap:6px;width:210px;height:27px;align-items:center;color:#c4c4c4;}
.adj svg{width:18px;height:16px;}

.layers{display:flex;flex:1;flex-direction:column;padding:0;border:0;}
.filter-row{display:flex;align-items:center;height:28px;padding:0 3px 0 5px;border-bottom:1px solid #3a3a3a;}
.find{position:relative;width:70px;}
.find svg{position:absolute;left:7px;top:6px;width:9px;height:10px;}
.find select{width:70px;padding-left:21px;}
.kinds{display:grid;grid-template-columns:repeat(5,24px);align-items:center;justify-items:center;margin-left:25px;color:#bdbdbd;font-size:16px;}
.kinds svg{width:13px;height:12px;}
.toggle{width:9px;height:17px;margin-left:auto;border:1px solid #2e2e2e;background:linear-gradient(#999 40%,#3a3a3a 40%);}
.blend-row{display:flex;align-items:center;gap:5px;height:28px;padding:0 4px 0 5px;border-top:1px solid #666;border-bottom:1px solid #3a3a3a;}
.blend-row .btn-select{width:130px;}
.blend-row .combo{flex:none;width:59px;margin-left:auto;}
.locks{gap:8px;height:30px;padding-bottom:4px;color:#bdbdbd;}
.locks svg{flex:none;width:14px;height:14px;}
.lock-label,.fill-label{color:#e4e4e4;}
.fill-label{margin-left:auto;}
.locks .combo{margin-left:-3px;}
.layer-list{flex:1;margin:0;padding:0 15px 0 0;list-style:none;background:#464646;}
.layer-list li{display:flex;align-items:center;height:39px;border-bottom:1px solid #333;background:#535353;}
.layer-list .sel{background:#596678;}
.eye{display:flex;align-items:center;justify-content:center;align-self:stretch;width:31px;border-right:1px solid #3a3a3a;background:#535353;}
.eye svg{width:12px;height:10px;}
.thumb-t{width:36px;height:36px;margin-left:1px;font-size:26px;line-height:36px;text-align:center;color:#c3d0e0;
	background:linear-gradient(#fff,#fff) 0 0/12px 1px,linear-gradient(#fff,#fff) 0 0/1px 12px,linear-gradient(#fff,#fff) 100% 0/12px 1px,linear-gradient(#fff,#fff) 100% 0/1px 12px,linear-gradient(#fff,#fff) 0 100%/12px 1px,linear-gradient(#fff,#fff) 0 100%/1px 12px,linear-gradient(#fff,#fff) 100% 100%/12px 1px,linear-gradient(#fff,#fff) 100% 100%/1px 12px;background-repeat:no-repeat;}
.thumb{width:24px;height:32px;margin-left:3px;background:#fff;border:1px solid #111;}
.name{margin-left:8px;}
.thumb+.name{margin-left:11px;}
.lk{width:11px;height:13px;margin-left:auto;margin-right:16px;color:#bbb;}
.layer-foot{display:flex;align-items:center;justify-content:flex-end;gap:14px;height:19px;padding-right:28px;border-top:1px solid #666;color:#c4c4c4;}
.layer-foot svg{width:13px;height:12px;}
.fx{font:italic 14px/14px "Liberation Serif",serif;}

/* open menu */
.dropdown{position:absolute;left:97px;top:23px;width:429px;padding:2px 0;border:1px solid #979797;background:#f0f0f0;box-shadow:3px 3px 3px rgba(0,0,0,.5);}
.dropdown button{position:relative;display:flex;justify-content:space-between;width:100%;height:24px;padding:0 18px 0 23px;font-size:15px;font-weight:300;line-height:24px;color:#000;}
.dropdown button:disabled{color:#666;}
.dropdown kbd{font:inherit;}
.dropdown hr{height:2px;margin:5px 3px;border-top:1px solid #a0a0a0;background:#fff;}
.dropdown .sub::after{content:"";position:absolute;right:10px;top:4px;border:5px solid transparent;border-left:5px solid #000;border-right:0;}
.scribble{position:absolute;left:0;top:0;pointer-events:none;}

/* taskbar */
.taskbar{position:relative;z-index:0;display:flex;align-items:center;height:47px;border-top:1px solid #9fb0cf;
	background:linear-gradient(90deg,#43568c 0,#41568d 12%,#364c82 22%,#45598f 28%,#3b5088 30%,#4c66a0 32%,#5c76ae 40%,#2c416e 42%,#2c416e 48%,#6f89c2 50%,#5f79b3 57%,#7891c8 63%,#7089bd 67%,#869fd8 70%,#7f98d0 71%,#3b4a76 74%,#33436c 82%,#34446e 90%,#3b4c78);}
.backdrop{position:absolute;z-index:-1;left:0;top:0;width:100%;height:100%;overflow:hidden;}
.start{width:72px;padding-left:11px;}
.start svg{display:block;width:43px;height:43px;}
.task{width:66px;height:46px;margin-right:4px;border-radius:2px;}
.task svg{display:block;width:38px;height:38px;margin:auto;}
.task.running{border:1px solid #c0cbe0;background:linear-gradient(120deg,#a0acc9,#6f7fa8 50%,#8c9abb);}
.task.running.on{border-color:#fff;background:linear-gradient(120deg,#e3e9f3,#a5b2cc 50%,#ced6e4);}
.adobe{display:block;width:37px;height:37px;margin:auto;border:2px solid #7fb4f5;background:#10104f;font:600 21px/29px "Open Sans",sans-serif;color:#8abcf7;}
.adobe.ai{border-color:#f2992e;background:#2b1705;color:#f2a03a;}
.tray{display:flex;align-items:center;align-self:stretch;margin-left:auto;color:#fff;}
.lang-ind{font:14px/18px "Liberation Sans",sans-serif;margin:-4px 19px 0 0;}
.tray-icons{display:flex;gap:10px;}
.tray-icons svg{width:20px;height:20px;}
.clock{display:flex;flex-direction:column;align-items:center;margin:0 13px 0 22px;font-size:14px;line-height:22px;}
.desktop{width:15px;height:46px;border:1px solid #8595b5;background:linear-gradient(135deg,#5d6c90,#2c3a60);}
```
FILE: rulers.js
```js
// 2 cm cada 59,1 px al 25%
var CM = 29.55;

function line(x1, y1, x2, y2, color){
	return '<path d="M' + x1 + ' ' + y1 + 'L' + x2 + ' ' + y2 + '" stroke="' + color + '"/>';
}

function drawH(svg, origin){
	var w = svg.clientWidth, h = svg.clientHeight, out = '';
	for(var i = Math.ceil(-origin / CM * 5); origin + i * CM / 5 < w; i++){
		var x = Math.round(origin + i * CM / 5) + 0.5;
		var len = i % 10 === 0 ? h : (i % 5 === 0 ? 6 : 3);
		out += line(x, h - len, x, h, '#6a6a6a');
		if(i % 10 === 0 && i >= 0 && i < 180){
			out += '<text x="' + (x + 3) + '" y="12">' + i / 5 + '</text>';
		}
	}
	svg.innerHTML = out;
}

function drawV(svg, origin){
	var w = svg.clientWidth, h = svg.clientHeight, out = '';
	for(var i = Math.ceil(-origin / CM * 5); origin + i * CM / 5 < h; i++){
		var y = Math.round(origin + i * CM / 5) + 0.5;
		var len = i % 10 === 0 ? w : (i % 5 === 0 ? 6 : 3);
		out += line(w - len, y, w, y, '#6a6a6a');
		if(i % 10 === 0 && i >= 0){
			// las cifras van una debajo de otra
			out += '<text y="' + y + '">';
			String(i / 5).split('').forEach(function(n, k){
				if(y + k * 12 < h){
					out += '<tspan x="4" dy="' + (k ? 12 : 11) + '">' + n + '</tspan>';
				}
			});
			out += '</text>';
		}
	}
	svg.innerHTML = out;
}

drawH(document.getElementById('rulerH'), 444);
drawV(document.getElementById('rulerV'), 18);
```
